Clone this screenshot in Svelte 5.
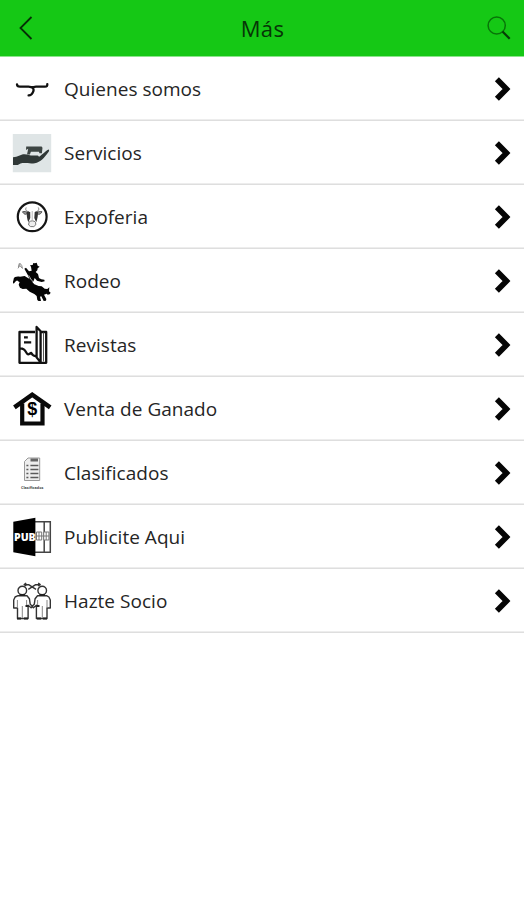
<script>
  const items = [
    ['bull', 'Quienes somos'],
    ['service', 'Servicios'],
    ['cow', 'Expoferia'],
    ['rodeo', 'Rodeo'],
    ['magazine', 'Revistas'],
    ['house', 'Venta de Ganado'],
    ['list', 'Clasificados'],
    ['pub', 'Publicite Aqui'],
    ['people', 'Hazte Socio']
  ];
</script>

<div class="screen">
  <header>
    <svg class="back" width="20" height="30" viewBox="0 0 20 30"><path d="M15.5 4 4.5 15l11 11" fill="none" stroke="#062f06" stroke-width="1.8" /></svg>
    <h1>Más</h1>
    <svg class="search" width="28" height="28" viewBox="0 0 28 28" fill="none">
      <circle cx="11.7" cy="11.5" r="8.6" stroke="#087408" stroke-width="1.5" />
      <path d="m17.5 17.5 7.2 7.3" stroke="#063d06" stroke-width="2.2" />
    </svg>
  </header>
  <ul>
    {#each items as [icon, label]}
      <li>
        <svg class="icon" width="40" height="40" viewBox="0 0 40 40">
          {#if icon === 'bull'}
            <path d="M5 15.3C5 17.2 6.2 17.7 8 17.7h8.5c1.7 0 3 .5 3.9.5s1.8-.5 3.6-.5h9c2 0 2.4-.8 2.3-2.6M19.2 18.2c2.6.7 3 2.9 1.6 5.3-.9 1.8-2.3 3-4.2 2.8" fill="none" stroke="#111" stroke-width="2.3" stroke-linecap="round" />
          {:else if icon === 'service'}
            <path fill="#dfe5e6" d="M.8 1h38.4v38.2H.8z" />
            <path fill="#303837" d="M1 24.2c5-.2 7.2-3 11.5-3 4 0 5.5 1.7 10 1.3 3.5-.3 5 .4 4.2 1.4 4.3-2.4 6.8-6.4 10-7.4.8.7.3 2-.6 3.1-4 5.3-7.3 9.8-13.3 10.6-6.3.8-9.2-1-14.3.2L5.8 32H1z" />
            <path fill="#3d4543" d="M14.2 13.4h15.4l.9 1.3-.6 5.5h-2.4l-.6-1.4h-8l-1 2.7h-2.9l1.2-5.7-2.2 1.2z" />
          {:else if icon === 'cow'}
            <circle cx="20.2" cy="19.8" r="14.4" fill="none" stroke="#151515" stroke-width="2.2" />
            <path d="M14.2 10.5c-1.4 3 .6 3.9 2.8 4.2m9.3-4.2c1.4 3-.6 3.9-2.8 4.2" fill="none" stroke="#777" stroke-width="1" />
            <path d="M10.5 14.8c2-.6 3.6-.3 5 .9-.8 2.3-3.2 2.3-5-.9zm19.5 0c-2-.6-3.6-.3-5 .9.8 2.3 3.2 2.3 5-.9z" fill="#999" stroke="#555" stroke-width="1" />
            <path fill="#333" d="M14.7 14.5 18.2 15l.1 6-2 4.2c-1.2-3-1.8-7-1.6-10.7zm8 .5 3.2-.5c.4 3.7-.5 7.5-1.7 10.7l-1.9-4.1z" />
            <path d="M17 25.2c1.7-1.8 4.9-1.8 6.5 0l.3 2.6-2 1.8h-3.2L16.6 28z" fill="#eee" stroke="#777" stroke-width="1" />
            <path d="M20.3 14v9" stroke="#ccc" stroke-width="1.4" />
          {:else if icon === 'rodeo'}
            <g transform="translate(0 -1) scale(.3333)">
              <path d="m32 26-9-10 1-6 5 6 2 8M22 10l-3 11m-1 4 6-9" fill="none" stroke="#8b8b8b" stroke-width="3" />
              <path d="M42 23 51 34l8-2-2-12-3-4 8-1 2-6 5 1 5-2 3 9 6 3-6 5-1 6-5 5 7 6 3 12 7 4 9 1 1 5-9 2-14-4-7-8-4 11H56L47 44 37 26z" fill="#050505" />
              <path d="M24 50c-8-2-18 0-19 6 0 6-5 12 0 15l7-8c5-5 6 2 11 3l-3 8 4 9 8 4 11-1 10 9 14 7 7 6 2 12 7 6 4-4-3-12 4-1 7 14 7-1 1-5-7-13 8-3 3 3 6-1 3-5-5-4 1-12-6 5-8-1-9-7-9-1-13-5-13-15-16-10z" fill="#050505" />
              <path d="m50 46 8 14 8 7 8 1" fill="none" stroke="#fff" stroke-width="2" />
            </g>
          {:else if icon === 'magazine'}
            <g fill="none" stroke="#111" stroke-width="2.3" stroke-linejoin="round">
              <path d="M23 7H7.5v30.8h26.7V7H29M7.5 23c4.2.7 5 1.5 6.8 4.5 2 3.6 3 .8 5 .5 1.2 2.2 2.2 3.3 5 3.1M24.6 2l4 4.2v31.2l-4-5z" />
              <path d="M12 12.3h3.8M12 17.3h7.2" />
              <path stroke-width="1" stroke="#555" d="M31.5 7.5v29" />
            </g>
          {:else if icon === 'house'}
            <path d="M2.4 18.4 20.2 5.7l18 12.7" fill="none" stroke="#090909" stroke-width="4.5" />
            <path d="M10.2 14.5v20h20.3v-20" fill="none" stroke="#090909" stroke-width="4.2" />
            <text x="20.3" y="26.4" text-anchor="middle" class="dollar">$</text>
          {:else if icon === 'list'}
            <path d="M12.5 8.5 16 5h11.7v22.5H12.5z" fill="#eee" stroke="#999" stroke-width="1" />
            <path fill="#666" d="M18.5 5.5h7.5v3h-7.5z" />
            <path d="M14.4 12.5h2m-2 4h2m-2 4h2m-2 4h2m2-12h8m-8 4h8m-8 4h8m-8 4h8" stroke="#5b5b5b" stroke-width="1.3" />
            <text x="20.2" y="35.6" text-anchor="middle" class="caption">Clasificados</text>
          {:else if icon === 'pub'}
            <path d="M23 4.8h15.3v30.5H23M32.2 5v30" fill="#fff" stroke="#444" stroke-width="1.5" />
            <path d="M1.3 4.8 23.4.8v38.5l-22.1-4z" fill="#000" />
            <text x="2" y="23.7" class="pub">PUB</text>
            <path d="M24.5 15h5.2v8h-5.2zm7.2 0h5.2v8h-5.2zm-7.2 4h12.4M27 15v8m7.2-8v8" fill="#fff" stroke="#777" stroke-width="1" />
          {:else}
            <g fill="white" stroke="#333" stroke-width="1.4" stroke-linejoin="round">
              <path fill="none" d="m12.3 3.6 4.7.2 7 4.5M28 3.6l-4.7.2-7 4.5M14.2 2l-2 1.6 2 1.4m12-3 2 1.6-2 1.4M13 25h14" />
              <circle cx="10.3" cy="9.5" r="4.3" /><circle cx="30.2" cy="9.5" r="4.3" />
              <path d="M6 14.7h9l2.4 3 .8 5.5 2.2 2-1.3 1.5-3-2.4v13.2H5.5V27H1.7V19l1.4-3zM34.5 14.7h-9l-2.4 3-.8 5.5-2.2 2 1.3 1.5 3-2.4v13.2H35V27h3.3V19l-1.4-3z" />
              <path fill="none" stroke="#888" stroke-width="1" d="M5.4 19v8m4.9-2v12M30.3 25v12M35 19v8M14.6 19v6m11-6v6" />
            </g>
            <path d="M5 37.5h4m3 0h4m9 0h4m2 0h4M13.5 25h3m8 0h3M7.5 14h5.6m14.3 0H33" stroke="#222" stroke-width="1.8" />
          {/if}
        </svg>
        <span>{label}</span>
        <svg class="chevron" width="24" height="30" viewBox="0 0 24 30"><path d="m4.9 5.2 9.6 9.8-9.6 9.8" fill="none" stroke="#050505" stroke-width="5.6" /></svg>
      </li>
    {/each}
  </ul>
</div>

<style>
  .screen { height: 900px; overflow: hidden; background: #fff; font-family: 'Open Sans', 'Noto Sans', sans-serif; }
  header { height: 57px; display: grid; grid-template-columns: 64px 1fr 64px; align-items: center; background: #15c815; border-bottom: 1px solid #8ce58c; box-sizing: border-box; }
  .back { margin-left: 16px; }
  .search { margin-left: 25px; }
  h1 { margin: 0 0 0 1px; text-align: center; font-size: 22px; font-weight: 400; line-height: 30px; letter-spacing: .35px; color: #073507; }
  ul { list-style: none; margin: 0; padding: 0; }
  li { height: 64px; box-sizing: border-box; border-bottom: 1px solid #dedede; box-shadow: inset 0 -1px #ededed; display: flex; align-items: center; padding: 1px 8px 0 12px; }
  .icon { flex: none; overflow: hidden; }
  span { flex: 1; margin-left: 12px; font-size: 19px; letter-spacing: .03px; color: #252525; white-space: nowrap; }
  .dollar { font: bold 18px 'Liberation Sans', sans-serif; }
  .caption { font: bold 3.8px 'Open Sans', sans-serif; fill: #444; }
  .pub { font: 800 10.5px 'Open Sans', sans-serif; fill: #fff; }
</style>
